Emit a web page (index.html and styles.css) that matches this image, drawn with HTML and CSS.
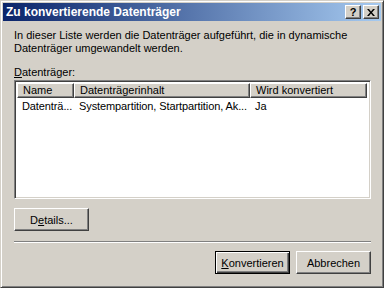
FILE: index.html
```html
<!DOCTYPE html>
<html lang="de">
<head>
  <meta charset="UTF-8" />
  <title>Zu konvertierende Datenträger</title>
  <link rel="stylesheet" href="styles.css">
</head>
<body>

  <div class="window">

    <!-- Title bar -->
    <div class="titlebar">
      <div class="title">Zu konvertierende Datenträger</div>
      <div class="caption-buttons">
        <div class="cap-btn help">?</div>
        <div class="cap-btn close">
          <svg width="8" height="7" viewBox="0 0 8 7">
            <path d="M0 0h2l2 2.5 2-2.5h2l-3 3.5 3 3.5h-2l-2-2.5-2 2.5h-2l3-3.5z" fill="#000"/>
          </svg>
        </div>
      </div>
    </div>

    <!-- Dialog content -->
    <div class="content">
      <p class="intro">In dieser Liste werden die Datenträger aufgeführt, die in dynamische Datenträger umgewandelt werden.</p>

      <div class="label"><u>D</u>atenträger:</div>

      <div class="listview">
        <div class="list-head">
          <div class="col col-name">Name</div>
          <div class="col col-content">Datenträgerinhalt</div>
          <div class="col col-conv">Wird konvertiert</div>
        </div>
        <div class="list-row">
          <div class="cell col-name">Datenträ...</div>
          <div class="cell col-content">Systempartition, Startpartition, Ak...</div>
          <div class="cell col-conv">Ja</div>
        </div>
      </div>

      <div class="details-row">
        <button class="btn">D<u>e</u>tails...</button>
      </div>

      <div class="separator"></div>

      <div class="actions">
        <button class="btn default"><u>K</u>onvertieren</button>
        <button class="btn">Abbrechen</button>
      </div>
    </div>

  </div>

</body>
</html>
```

FILE: styles.css
```css
* {
  margin: 0;
  padding: 0;
  box-sizing: border-box;
}

body {
  width: 384px;
  height: 288px;
  overflow: hidden;
  font-family: 'Liberation Sans', Arial, sans-serif;
  font-size: 11px;
  color: #000;
  background: #d4d0c8;
}

/* Window frame */
.window {
  width: 384px;
  height: 288px;
  background: #d4d0c8;
  border: 1px solid;
  border-color: #d4d0c8 #404040 #404040 #d4d0c8;
  box-shadow: inset 1px 1px #fff, inset -1px -1px #808080;
  padding: 2px;
  display: flex;
  flex-direction: column;
}

/* Title bar */
.titlebar {
  height: 18px;
  background: linear-gradient(to right, #0a246a, #a6caf0);
  display: flex;
  align-items: center;
  justify-content: space-between;
  padding: 0 2px 0 2px;
}

.title {
  color: #fff;
  font-weight: bold;
  font-size: 12px;
  padding-left: 1px;
}

.caption-buttons {
  display: flex;
  gap: 2px;
}

.cap-btn {
  width: 16px;
  height: 14px;
  background: #d4d0c8;
  border: 1px solid;
  border-color: #fff #404040 #404040 #fff;
  box-shadow: inset -1px -1px #808080;
  display: flex;
  align-items: center;
  justify-content: center;
  font-weight: bold;
  font-size: 11px;
  line-height: 1;
}

/* Content */
.content {
  flex: 1;
  padding: 8px 10px 0 11px;
  display: flex;
  flex-direction: column;
}

.intro {
  line-height: 13px;
  padding-right: 20px;
}

.label {
  margin-top: 11px;
  line-height: 13px;
}

/* List view */
.listview {
  margin-top: 1px;
  height: 119px;
  background: #fff;
  border: 1px solid;
  border-color: #808080 #fff #fff #808080;
  box-shadow: inset 1px 1px #404040, inset -1px -1px #d4d0c8;
  padding: 2px;
}

.list-head {
  display: flex;
  height: 15px;
}

.col {
  background: #d4d0c8;
  border: 1px solid;
  border-color: #fff #404040 #404040 #fff;
  box-shadow: inset -1px -1px #808080;
  padding-left: 5px;
  line-height: 12px;
  white-space: nowrap;
}

.col-name {
  width: 57px;
}

.col-content {
  width: 176px;
}

.col-conv {
  width: 117px;
}

.list-row {
  display: flex;
  margin-top: 2px;
  line-height: 13px;
  letter-spacing: -0.1px;
}

.cell {
  flex-shrink: 0;
  padding-left: 5px;
  white-space: nowrap;
}

/* Buttons */
.btn {
  width: 75px;
  height: 23px;
  font-family: inherit;
  font-size: 11px;
  background: #d4d0c8;
  border: 1px solid;
  border-color: #fff #404040 #404040 #fff;
  box-shadow: inset -1px -1px #808080;
}

.btn.default {
  border: 1px solid #000;
  box-shadow: inset 1px 1px #fff, inset -1px -1px #404040, inset -2px -2px #808080;
}

.details-row {
  margin-top: 9px;
}

.separator {
  margin-top: 10px;
  height: 2px;
  border-top: 1px solid #808080;
  border-bottom: 1px solid #fff;
}

.actions {
  margin-top: 8px;
  display: flex;
  justify-content: flex-end;
  gap: 6px;
}
```
